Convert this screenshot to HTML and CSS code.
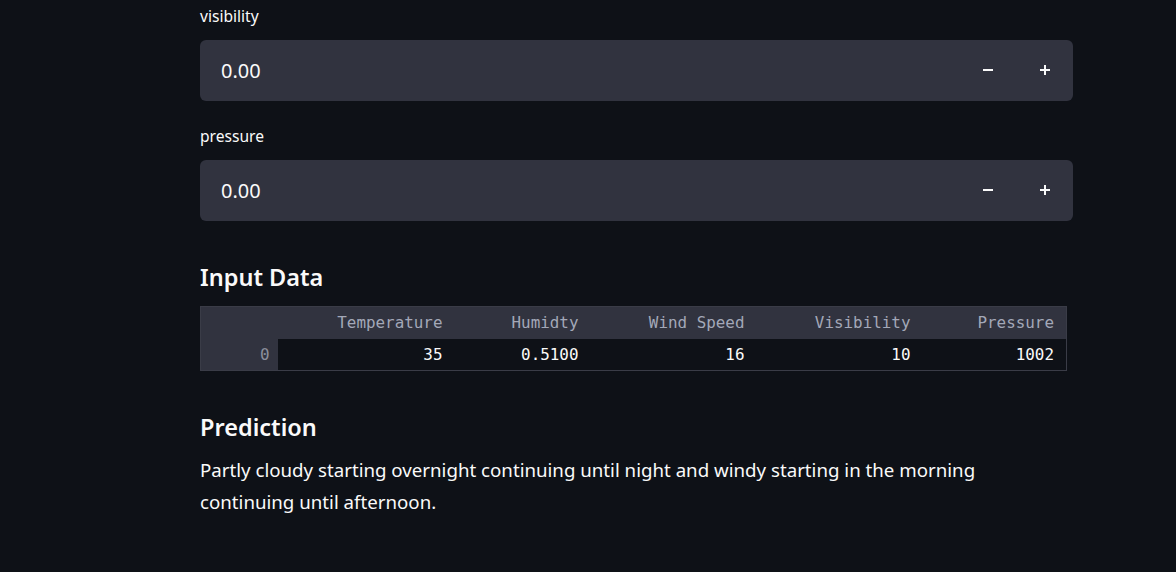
FILE: index.html
```html
<!DOCTYPE html>
<html>
<head>
<meta charset="utf-8">
<link rel="stylesheet" href="styles.css">
</head>
<body>
<main class="main">
  <div class="field">
    <label class="label">visibility</label>
    <div class="num-input">
      <div class="num-value">0.00</div>
      <div class="steps">
        <button class="step"><svg width="12" height="12" viewBox="0 0 12 12"><rect x="1" y="5" width="10" height="2" fill="#fafafa"/></svg></button>
        <button class="step"><svg width="12" height="12" viewBox="0 0 12 12"><rect x="1" y="5" width="10" height="2" fill="#fafafa"/><rect x="5" y="1" width="2" height="10" fill="#fafafa"/></svg></button>
      </div>
    </div>
  </div>
  <div class="field">
    <label class="label">pressure</label>
    <div class="num-input">
      <div class="num-value">0.00</div>
      <div class="steps">
        <button class="step"><svg width="12" height="12" viewBox="0 0 12 12"><rect x="1" y="5" width="10" height="2" fill="#fafafa"/></svg></button>
        <button class="step"><svg width="12" height="12" viewBox="0 0 12 12"><rect x="1" y="5" width="10" height="2" fill="#fafafa"/><rect x="5" y="1" width="2" height="10" fill="#fafafa"/></svg></button>
      </div>
    </div>
  </div>

  <h3 class="heading h-input">Input Data</h3>
  <table class="df">
    <thead>
      <tr>
        <th class="idx"></th>
        <th class="c1">Temperature</th>
        <th class="c2">Humidty</th>
        <th class="c3">Wind Speed</th>
        <th class="c4">Visibility</th>
        <th class="c5">Pressure</th>
      </tr>
    </thead>
    <tbody>
      <tr>
        <th class="idx">0</th>
        <td>35</td>
        <td>0.5100</td>
        <td>16</td>
        <td>10</td>
        <td>1002</td>
      </tr>
    </tbody>
  </table>

  <h3 class="heading h-pred">Prediction</h3>
  <p class="text">Partly cloudy starting overnight continuing until night and windy starting in the morning continuing until afternoon.</p>
</main>
</body>
</html>
```
FILE: styles.css
```css
html, body {
  margin: 0;
  padding: 0;
  background: #0e1117;
  color: #fafafa;
  font-family: "Noto Sans", "Open Sans", sans-serif;
}
.main {
  width: 873px;
  margin-left: 200px;
  padding-top: 6px;
}
.field {
  margin-bottom: 25px;
}
.label {
  display: block;
  font-size: 15.6px;
  line-height: 21px;
  margin-bottom: 13px;
  color: #fafafa;
}
.num-input {
  display: flex;
  height: 61px;
  background: #31333f;
  border-radius: 6px;
}
.num-value {
  flex: 1;
  display: flex;
  align-items: center;
  padding-left: 21px;
  font-size: 20px;
}
.steps {
  display: flex;
  height: 60px;
}
.step {
  width: 57px;
  height: 100%;
  border: none;
  background: transparent;
  display: flex;
  align-items: center;
  justify-content: center;
  padding: 0;
}
.heading {
  margin: 0;
  font-size: 23.5px;
  font-weight: 600;
  line-height: 36px;
}
.h-input {
  margin-top: 38px;
  margin-bottom: 11px;
}
.df {
  width: 867px;
  border-collapse: collapse;
  border: 1px solid #3a3c47;
  font-family: "DejaVu Sans Mono", "Liberation Mono", monospace;
  font-size: 15.9px;
}
.df th, .df td {
  height: 32px;
  padding: 0 12px 0 0;
  text-align: right;
  font-weight: 400;
  box-sizing: border-box;
}
.df thead th {
  background: #31333f;
  color: #a3a8b8;
}
.df tbody th.idx {
  background: #31333f;
  color: #8b8f9c;
  padding-right: 8px;
}
.df tbody td {
  color: #fafafa;
}
.df .idx { width: 77px; }
.df .c1 { width: 177px; }
.df .c2 { width: 136px; }
.df .c3 { width: 166px; }
.df .c4 { width: 166px; }
.h-pred {
  margin-top: 38px;
  margin-bottom: 9px;
}
.text {
  margin: 0;
  font-size: 18.7px;
  line-height: 32px;
  width: 800px;
}
```
